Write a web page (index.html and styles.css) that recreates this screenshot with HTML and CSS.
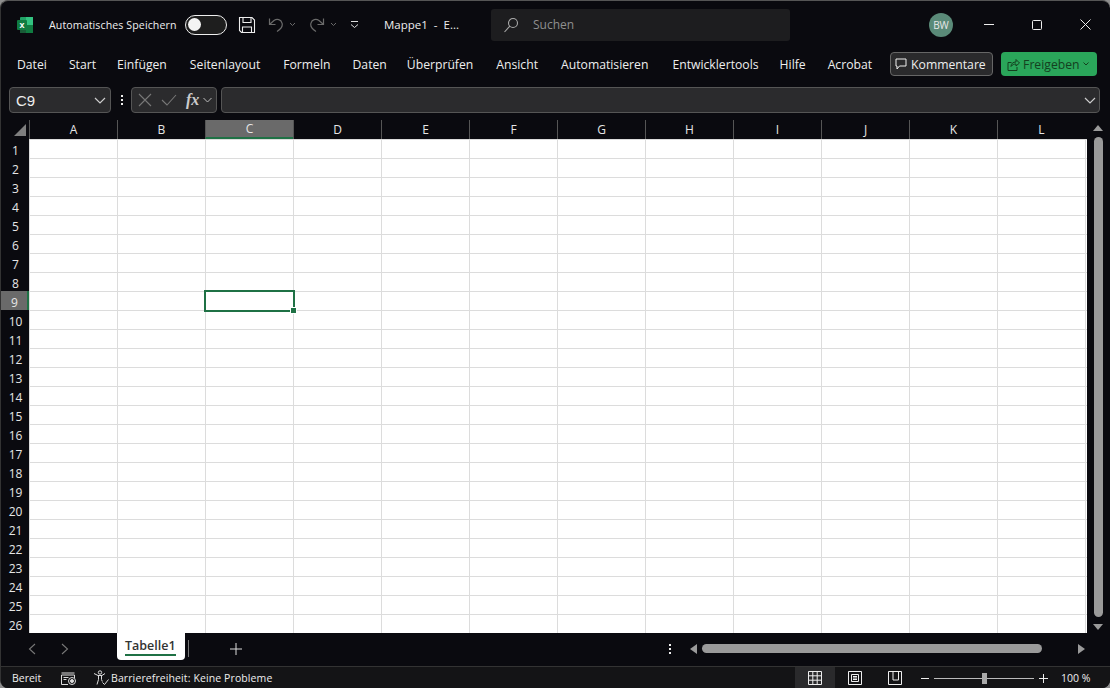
FILE: index.html
```html
<!DOCTYPE html>
<html lang="de">
<head>
<meta charset="utf-8">
<title>Mappe1 - Excel</title>
<link rel="stylesheet" href="styles.css">
</head>
<body>
<div class="window">
  <header class="titlebar">
    <svg class="logo" width="18" height="18" viewBox="0 0 18 18"><rect x="4" y="1" width="13" height="16" rx="1" fill="#21a366"/><rect x="10" y="1" width="7" height="8" fill="#33c481"/><rect x="10" y="9" width="7" height="8" fill="#107c41"/><rect x="4" y="9" width="6" height="8" fill="#185c37"/><rect x="1" y="4" width="10" height="10" rx="1" fill="#107c41"/><text x="6" y="12" class="logo-x">x</text></svg>
    <span class="autosave">Automatisches Speichern</span>
    <span class="toggle"><span class="knob"></span></span>
    <svg class="save" width="18" height="18" viewBox="0 0 18 18" fill="none" stroke="#eee" stroke-width="1.1"><path d="M1.500 1.500h12.500l2.500 2.500v12.500h-13l-2-2z"/><path d="M5 1.500v5h8v-5M4.500 16.500v-5.500h9v5.500"/></svg>
    <svg class="undo" width="16" height="16" viewBox="0 0 16 16" fill="none" stroke="#6a6a6a" stroke-width="1.2"><path d="M1.500 1.500v6h6M1.500 7.500 6 3.500c3-2 7-1 8 2.500 1 3-1 6-5 8.500"/></svg>
    <svg class="chev-s c1" width="7" height="5" viewBox="0 0 7 5" fill="none" stroke="#6a6a6a"><path d="m1 1 2.500 2.500L6 1"/></svg>
    <svg class="redo" width="16" height="16" viewBox="0 0 16 16" fill="none" stroke="#6a6a6a" stroke-width="1.2"><path d="M14.500 1.500v6h-6M14.500 7.500 10 3.500c-3-2-7-1-8 2.500-1 3 1 6 5 8.500"/></svg>
    <svg class="chev-s c2" width="7" height="5" viewBox="0 0 7 5" fill="none" stroke="#6a6a6a"><path d="m1 1 2.500 2.500L6 1"/></svg>
    <svg class="qat" width="9" height="9" viewBox="0 0 9 9" fill="none" stroke="#ddd"><path d="M1 1.500h7M1 4.500l3.500 3 3.500-3"/></svg>
    <span class="doc">Mappe1&nbsp; -&nbsp; E...</span>
    <div class="search">
      <svg width="16" height="16" viewBox="0 0 16 16" fill="none" stroke="#aaa" stroke-width="1.1"><circle cx="10" cy="6" r="4.500"/><path d="M6.800 9.200 1.500 15"/></svg>
      <span>Suchen</span>
    </div>
    <span class="avatar">BW</span>
    <div class="winctl">
      <svg width="10" height="10" viewBox="0 0 10 10" stroke="#eee" fill="none"><path d="M0 4.500h10"/></svg>
      <svg width="10" height="10" viewBox="0 0 10 10" stroke="#eee" fill="none"><rect x=".5" y=".5" width="9" height="9" rx="1"/></svg>
      <svg width="11" height="11" viewBox="0 0 11 11" stroke="#eee" fill="none"><path d="m.5.500 10 10M10.500.500l-10 10"/></svg>
    </div>
  </header>

  <nav class="menubar">
    <a class="m1">Datei</a><a class="m2">Start</a><a class="m3">Einfügen</a><a class="m4">Seitenlayout</a><a class="m5">Formeln</a><a class="m6">Daten</a><a class="m7">Überprüfen</a><a class="m8">Ansicht</a><a class="m9">Automatisieren</a><a class="m10">Entwicklertools</a><a class="m11">Hilfe</a><a class="m12">Acrobat</a>
    <button class="comment">
      <svg width="12" height="12" viewBox="0 0 12 12" fill="none" stroke="#eee"><path d="M.5.500h10v7H4L1.500 10.500V7.500h-1z" transform="translate(.5 .5)"/></svg>
      Kommentare
    </button>
    <button class="share">
      <svg width="13" height="13" viewBox="0 0 13 13" fill="none" stroke="#14401f"><path d="M4.500 4.500H1v8h9V9M4 8.500c0-3 2-4.500 5-4.500V1.500l3.500 3.500L9 8V6C7 6 5.500 6.500 4 8.500z"/></svg>
      Freigeben
      <svg width="6" height="4" viewBox="0 0 6 4" fill="none" stroke="#14401f"><path d="m.5.500 2.500 2.500L5.500.500"/></svg>
    </button>
  </nav>

  <div class="formulabar">
    <div class="namebox"><span>C9</span>
      <svg width="12" height="7" viewBox="0 0 12 7" fill="none" stroke="#ccc" stroke-width="1.2"><path d="m1 1 5 5 5-5"/></svg>
    </div>
    <span class="dots"><i></i><i></i><i></i></span>
    <div class="fx-tools">
      <svg width="14" height="14" viewBox="0 0 14 14" fill="none" stroke="#777" stroke-width="1.1"><path d="m1 1 12 12M13 1 1 13"/></svg>
      <svg width="16" height="12" viewBox="0 0 16 12" fill="none" stroke="#777" stroke-width="1.1"><path d="m1 6 5 5L15 1"/></svg>
      <span class="fx">fx</span>
      <svg width="9" height="6" viewBox="0 0 9 6" fill="none" stroke="#bbb"><path d="m.5 1 4 4 4-4"/></svg>
    </div>
    <div class="formula-input">
      <svg width="12" height="7" viewBox="0 0 12 7" fill="none" stroke="#ccc" stroke-width="1.2"><path d="m1 1 5 5 5-5"/></svg>
    </div>
  </div>

  <main class="sheet">
    <div class="colheads">
      <div class="corner"><span class="tri"></span></div>
      <div class="col">A</div><div class="col">B</div><div class="col sel">C</div><div class="col">D</div><div class="col">E</div><div class="col">F</div><div class="col">G</div><div class="col">H</div><div class="col">I</div><div class="col">J</div><div class="col">K</div><div class="col">L</div>
    </div>
    <div class="body">
      <div class="rowheads">
        <div class="row">1</div><div class="row">2</div><div class="row">3</div><div class="row">4</div><div class="row">5</div><div class="row">6</div><div class="row">7</div><div class="row">8</div><div class="row sel">9</div><div class="row">10</div><div class="row">11</div><div class="row">12</div><div class="row">13</div><div class="row">14</div><div class="row">15</div><div class="row">16</div><div class="row">17</div><div class="row">18</div><div class="row">19</div><div class="row">20</div><div class="row">21</div><div class="row">22</div><div class="row">23</div><div class="row">24</div><div class="row">25</div><div class="row">26</div>
      </div>
      <div class="cells"><div class="active"><span class="handle"></span></div></div>
    </div>
    <div class="vscroll">
      <span class="arrow-up"></span>
      <span class="vthumb"></span>
      <span class="arrow-down"></span>
    </div>
  </main>

  <div class="tabbar">
    <svg class="nav-l" width="8" height="12" viewBox="0 0 8 12" fill="none" stroke="#777" stroke-width="1.1"><path d="M7 1 1.500 6 7 11"/></svg>
    <svg class="nav-r" width="8" height="12" viewBox="0 0 8 12" fill="none" stroke="#777" stroke-width="1.1"><path d="m1 1 5.500 5L1 11"/></svg>
    <div class="tab"><span>Tabelle1</span></div>
    <span class="tabsep"></span>
    <svg class="plus" width="12" height="12" viewBox="0 0 12 12" stroke="#ddd"><path d="M6 0v12M0 6h12"/></svg>
    <span class="dots tabdots"><i></i><i></i><i></i></span>
    <div class="hscroll">
      <span class="arrow-left"></span>
      <span class="hthumb"></span>
      <span class="arrow-right"></span>
    </div>
  </div>

  <footer class="statusbar">
    <span class="ready">Bereit</span>
    <svg class="macro" width="15" height="13" viewBox="0 0 15 13" fill="none" stroke="#ddd"><path d="M.5 1h13M.5 3h13M.5 3v9.500H7M13.500 3v3M2.500 5.500h5M2.500 7.500h3"/><circle cx="11" cy="9" r="3.500"/><circle cx="11" cy="9" r="1.500" fill="#ddd"/></svg>
    <svg class="access" width="16" height="16" viewBox="0 0 16 16" fill="none" stroke="#ddd"><circle cx="7" cy="2.500" r="1.700"/><path d="M1 3.500 5 5.500h4l3-2M5.500 5.500v4l-1.500 5M8.500 5.500v4l.8 2M9.500 12.500l2 2 4-5"/></svg>
    <span class="a11y">Barrierefreiheit: Keine Probleme</span>
    <div class="views">
      <span class="view on"><svg width="14" height="14" viewBox="0 0 14 14" fill="none" stroke="#eee"><path d="M.5.500h13v13H.5zM.5 4.800h13M.5 9.200h13M4.800.500v13M9.200.500v13"/></svg></span>
      <span class="view"><svg width="14" height="14" viewBox="0 0 14 14" fill="none" stroke="#eee"><path d="M.5.500h13v13H.5zM3.500 3.500h7v7h-7zM5 5.500h4M5 7h4M5 8.500h4"/></svg></span>
      <span class="view"><svg width="14" height="14" viewBox="0 0 14 14" fill="none" stroke="#eee"><path d="M.5.500h13v13H.5zM5 .5v8.500h5.500V.5"/></svg></span>
    </div>
    <div class="zoom">
      <span class="minus"></span>
      <span class="track"><span class="thumb"></span></span>
      <svg width="9" height="9" viewBox="0 0 9 9" stroke="#eee"><path d="M4.500 0v9M0 4.500h9"/></svg>
      <span class="pct">100 %</span>
    </div>
  </footer>
</div>
</body>
</html>
```
FILE: styles.css
```css
* { box-sizing: border-box; }
html, body { margin: 0; height: 100%; background: #8e8e8e; }
body { font-family: "Open Sans", "Noto Sans", sans-serif; color: #eee; overflow: hidden; }
.window { width: 1110px; height: 688px; background: #0a0a0f; border-radius: 8px; border-top: 1px solid #555; border-left: 1px solid #333; display: flex; flex-direction: column; overflow: hidden; }

.titlebar { height: 48px; flex: none; display: flex; align-items: center; padding-left: 15px; font-size: 10.600px; padding-bottom: 1px; }
.logo { flex: none; }
.logo-x { font: bold 9px "Liberation Sans", sans-serif; fill: #fff; text-anchor: middle; }
.autosave { margin-left: 15px; width: 136px; white-space: nowrap; letter-spacing: .01em; }
.toggle { width: 42px; height: 20px; border: 1px solid #eee; border-radius: 10px; display: flex; align-items: center; padding-left: 2px; background: #1e1e1e; }
.knob { width: 13px; height: 13px; border-radius: 50%; background: #f4f4f4; }
.save { margin-left: 11px; flex: none; }
.undo { margin-left: 12px; flex: none; }
.chev-s { margin-left: 5px; flex: none; }
.redo { margin-left: 13px; flex: none; }
.qat { margin-left: 13px; flex: none; }
.doc { margin-left: 25px; width: 107px; font-size: 11.500px; white-space: nowrap; }
.search { width: 299px; height: 32px; background: #1d1d1f; border-radius: 3px; display: flex; align-items: center; gap: 14px; padding-left: 12px; color: #8f8f8f; font-size: 12px; }
.avatar { width: 24px; height: 24px; margin-left: 139px; border-radius: 50%; background: #5a8a78; color: #e8e8e8; font-size: 10px; display: flex; align-items: center; justify-content: center; }
.winctl { margin-left: 31px; display: flex; align-items: center; gap: 38px; }

.menubar { height: 35px; flex: none; position: relative; display: flex; align-items: center; font-size: 12.200px; padding-left: 16px; padding-bottom: 5px; }
.menubar a { white-space: nowrap; }
.m2 { margin-left: 22px; } .m3 { margin-left: 21px; } .m4 { margin-left: 23px; } .m5 { margin-left: 23px; } .m6 { margin-left: 22px; } .m7 { margin-left: 20px; } .m8 { margin-left: 23px; } .m9 { margin-left: 23px; } .m10 { margin-left: 24px; } .m11 { margin-left: 21px; } .m12 { margin-left: 22px; }
button { font: inherit; display: flex; align-items: center; border-radius: 4px; padding: 0; height: 24px; }
.comment { margin-left: 18px; width: 103px; background: #2a2a2c; border: 1px solid #666; color: #eee; gap: 4px; padding-left: 4px; }
.share { margin-left: 8px; width: 96px; background: #2aa65a; border: 0; color: #14401f; gap: 3px; padding-left: 6px; }

.formulabar { height: 36px; flex: none; display: flex; align-items: flex-start; padding: 3px 0 0 8px; }
.namebox { width: 102px; height: 26px; background: #2b2b2d; border: 1px solid #555; border-radius: 4px; display: flex; align-items: center; justify-content: space-between; padding: 0 4px 0 6px; font: 15px "Liberation Sans", sans-serif; color: #eee; }
.dots { display: flex; flex-direction: column; gap: 2px; }
.dots i { width: 2px; height: 2px; background: #eee; display: block; }
.formulabar .dots { margin: 8px 8px 0 10px; }
.fx-tools { width: 86px; height: 26px; background: #2b2b2d; border: 1px solid #555; border-radius: 4px; display: flex; align-items: center; padding-left: 6px; gap: 9px; }
.fx { font: italic bold 16px "Liberation Serif", serif; color: #ccc; margin-right: -5px; }
.formula-input { flex: none; width: 879px; margin-left: 4px; height: 26px; background: #2b2b2d; border: 1px solid #555; border-radius: 4px; display: flex; align-items: center; justify-content: flex-end; padding-right: 3px; }

.sheet { height: 513px; flex: none; position: relative; }
.colheads { display: flex; height: 19px; margin-right: 24px; }
.corner { width: 28px; height: 19px; flex: none; position: relative; }
.tri { position: absolute; right: 3px; bottom: 3px; width: 0; height: 0; border-left: 12px solid transparent; border-bottom: 12px solid #7f7f7f; }
.col { width: 88px; height: 19px; flex: none; border-left: 1px solid #555; display: flex; align-items: center; justify-content: center; font-size: 12px; color: #e6e6e6; }
.col.sel { background: #6a6a6a; border-bottom: 2px solid #1f7145; }
.body { display: flex; height: 494px; }
.rowheads { width: 28px; flex: none; }
.row { height: 19px; display: flex; align-items: center; justify-content: center; padding: 4px 0 0 1px; line-height: 15px; font-size: 12px; color: #e6e6e6; }
.row.sel { background: #6a6a6a; border-right: 2px solid #1f7145; }
.cells { width: 1058px; flex: none; position: relative; background-color: #fff;
  background-image:
    repeating-linear-gradient(to right, #dcdcdc 0 1px, transparent 1px 88px),
    repeating-linear-gradient(to bottom, #dcdcdc 0 1px, transparent 1px 19px); }
.active { position: absolute; left: 175px; top: 151px; width: 91px; height: 22px; border: 2px solid #1f7145; }
.handle { position: absolute; right: -3px; bottom: -3px; width: 5px; height: 5px; background: #1f7145; box-shadow: 0 0 0 1px #fff; }
.vscroll { position: absolute; right: 0; top: 0; width: 24px; height: 513px; display: flex; flex-direction: column; align-items: center; padding: 5px 0 0 0; }
.arrow-up { width: 0; height: 0; border: 5px solid transparent; border-top: 0; border-bottom: 6px solid #9a9a9a; }
.vthumb { width: 9px; height: 480px; margin-top: 6px; background: #9a9a9a; border-radius: 5px; }
.arrow-down { width: 0; height: 0; margin-top: 7px; border: 5px solid transparent; border-bottom: 0; border-top: 6px solid #9a9a9a; }

.tabbar { height: 33px; flex: none; display: flex; align-items: center; padding: 0 0 2px 27px; }
.nav-r { margin-left: 25px; }
.tab { align-self: flex-start; width: 68px; height: 27px; margin-left: 48px; background: #fff; border-radius: 0 0 4px 4px; color: #333; font-size: 12.500px; font-weight: 600; padding: 4px 0 0 8px; }
.tab span { display: inline-block; height: 19px; width: 51px; border-bottom: 2px solid #1f7145; line-height: 17px; white-space: nowrap; }
.tabsep { width: 1px; height: 17px; background: #777; margin-left: 3px; }
.plus { margin-left: 41px; }
.tabdots { margin-left: 427px; }
.hscroll { display: flex; align-items: center; margin-left: 19px; }
.arrow-left { width: 0; height: 0; border: 5px solid transparent; border-left: 0; border-right: 7px solid #9a9a9a; }
.hthumb { width: 340px; height: 9px; margin-left: 5px; background: #9a9a9a; border-radius: 5px; }
.arrow-right { width: 0; height: 0; margin-left: 36px; border: 5px solid transparent; border-right: 0; border-left: 7px solid #9a9a9a; }

.statusbar { flex: 1; display: flex; align-items: center; background: #141416; border-top: 1px solid #333; font-size: 10.500px; padding: 0 0 3px 11px; }
.ready { width: 49px; }
.macro { flex: none; }
.access { flex: none; margin-left: 17px; }
.a11y { margin-left: 2px; width: 684px; white-space: nowrap; letter-spacing: .01em; }
.views { display: flex; height: 22px; align-self: flex-start; }
.view { width: 40px; display: flex; align-items: center; justify-content: center; }
.view.on { background: #2a2a2c; }
.zoom { display: flex; align-items: center; margin-left: 6px; }
.minus { width: 8px; height: 1px; background: #eee; }
.track { width: 100px; height: 1px; background: #bbb; margin: 0 5px; position: relative; }
.thumb { position: absolute; left: 48px; top: -5px; width: 5px; height: 11px; background: #aaa; }
.pct { margin-left: 13px; font-size: 10.500px; }
```
